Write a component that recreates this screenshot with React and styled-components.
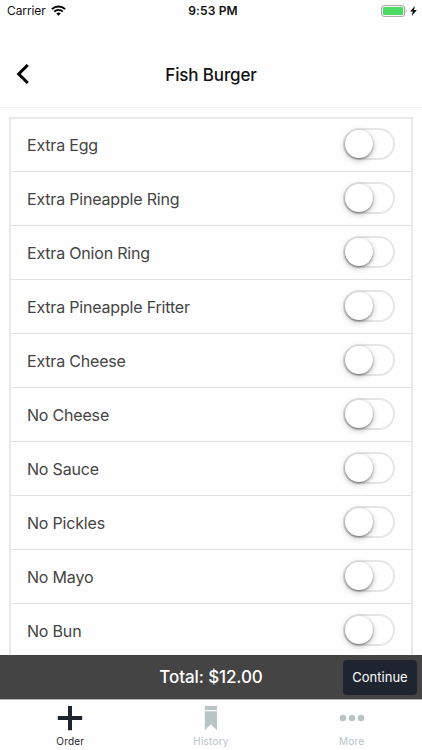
import { useState } from "react";
import styled, { createGlobalStyle } from "styled-components";

const GlobalStyle = createGlobalStyle`
  * {
    box-sizing: border-box;
  }

  body {
    margin: 0;
    background: #fff;
    font-family: Inter, "Liberation Sans", sans-serif;
  }
`;

const Screen = styled.div`
  display: flex;
  flex-direction: column;
  width: 422px;
  height: 750px;
  overflow: hidden;
  background: #fefefe;
`;

// Status bar
const StatusBar = styled.div`
  display: grid;
  grid-template-columns: 1fr auto 1fr;
  align-items: center;
  flex: none;
  height: 22px;
  padding: 0 5px 0 7px;
  color: #111;
  font-size: 12px;
  line-height: 22px;
`;

const Carrier = styled.div`
  display: flex;
  align-items: center;
  gap: 5px;
  letter-spacing: -0.1px;

  svg {
    margin-bottom: 1px;
  }
`;

const Clock = styled.div`
  padding-left: 2px;
  font-weight: 600;
  letter-spacing: 0.15px;
`;

const Power = styled.div`
  display: flex;
  align-items: center;
  justify-content: flex-end;
  gap: 3px;
`;

// Header
const Header = styled.header`
  display: grid;
  grid-template-columns: 48px 1fr 48px;
  align-items: center;
  flex: none;
  height: 86px;
  padding-top: 20px;
  border-bottom: 1px solid #f3f3f3;
`;

const BackButton = styled.button`
  display: flex;
  padding: 0 0 2px 16px;
  border: none;
  background: transparent;
  cursor: pointer;
`;

const Title = styled.h1`
  margin: 0;
  color: #111;
  font-size: 17px;
  font-weight: 500;
  letter-spacing: -0.15px;
  line-height: 24px;
  text-align: center;
`;

// Options
const Content = styled.main`
  flex: 1;
  min-height: 0;
  padding: 9px 9px 0;
  overflow: hidden;
`;

const OptionList = styled.ul`
  margin: 0;
  padding: 0;
  list-style: none;
  border: 2px solid #e9e9e9;
  border-bottom: none;
`;

const Option = styled.li`
  display: flex;
  align-items: center;
  justify-content: space-between;
  height: 54px;
  padding: 0 16px;
  border-bottom: 1px solid #e0e0e0;
  color: #444;
  font-size: 16px;
  letter-spacing: -0.19px;

  &:first-child {
    margin-top: -1px;
  }
`;

const Track = styled.button`
  display: flex;
  align-items: center;
  width: 52px;
  height: 32px;
  margin-bottom: 1px;
  padding: 0;
  border: 2px solid ${({ $on }) => ($on ? "#4cd964" : "#e6e6e6")};
  border-radius: 16px;
  background: ${({ $on }) => ($on ? "#4cd964" : "#fff")};
  cursor: pointer;
`;

const Thumb = styled.span`
  width: 28px;
  height: 28px;
  border-radius: 50%;
  background: #fff;
  box-shadow: 0 2px 6px rgba(0, 0, 0, 0.28), 0 1px 2px rgba(0, 0, 0, 0.4);
  transform: translateX(${({ $on }) => ($on ? 20 : 0)}px);
`;

// Total
const TotalBar = styled.div`
  display: grid;
  grid-template-columns: 1fr auto 1fr;
  align-items: center;
  flex: none;
  height: 45px;
  padding: 0 5px 0 5px;
  border-bottom: 1px solid #b5b5b5;
  background: #444;
`;

const Total = styled.div`
  grid-column: 2;
  color: #fff;
  font-size: 17px;
  font-weight: 500;
  letter-spacing: -0.1px;
`;

const ContinueButton = styled.button`
  justify-self: end;
  width: 74px;
  height: 35px;
  padding: 0;
  border: none;
  border-radius: 4px;
  background: #1e2430;
  color: #fff;
  font: inherit;
  font-size: 13px;
  cursor: pointer;
`;

// Tabs
const TabBar = styled.nav`
  display: grid;
  grid-template-columns: repeat(3, 1fr);
  flex: none;
  height: 50px;
`;

const Tab = styled.button`
  display: flex;
  flex-direction: column;
  align-items: center;
  padding: 5px 0 0;
  border: none;
  background: transparent;
  color: ${({ $active }) => ($active ? "#1e2430" : "#b8c4c6")};
  font: inherit;
  font-size: 10px;
  line-height: 14px;
  letter-spacing: 0.2px;
  cursor: pointer;

  svg {
    margin-bottom: 3px;
  }
`;

const options = [
  "Extra Egg",
  "Extra Pineapple Ring",
  "Extra Onion Ring",
  "Extra Pineapple Fritter",
  "Extra Cheese",
  "No Cheese",
  "No Sauce",
  "No Pickles",
  "No Mayo",
  "No Bun",
];

function WifiIcon() {
  return (
    <svg width="15" height="11" viewBox="0 0 15 11" fill="none" stroke="#000">
      <path d="M.9 4.1a9.4 9.4 0 0 1 13.2 0" strokeWidth="2" />
      <path d="M3.2 6.6a6 6 0 0 1 8.6 0" strokeWidth="1.8" />
      <path d="M5.3 8.6a3.1 3.1 0 0 1 4.4 0L7.5 10.8z" fill="#000" stroke="none" />
    </svg>
  );
}

function BatteryIcon() {
  return (
    <svg width="26" height="12" viewBox="0 0 26 12">
      <rect x="0.6" y="0.6" width="23" height="10.8" rx="2.4" fill="#fff" stroke="#a2a2a2" />
      <rect x="2" y="2" width="20.2" height="8" rx="1.2" fill="#4cd964" />
      <path d="M24.7 4.1c1.2.5 1.2 3.3 0 3.8z" fill="#a2a2a2" />
    </svg>
  );
}

function BoltIcon() {
  return (
    <svg width="7" height="10" viewBox="0 0 7 10">
      <path d="M4.8 0 .2 5.6h2.6L1.8 10l5-6H4z" fill="#000" />
    </svg>
  );
}

function PlusIcon() {
  return (
    <svg width="26" height="26" viewBox="0 0 26 26">
      <path d="M11 1h4v10.1h10.2v3.9H15v10.2h-4V15H.8v-3.9H11z" fill="currentColor" />
    </svg>
  );
}

function BookmarkIcon() {
  return (
    <svg width="26" height="26" viewBox="0 0 26 26" fill="currentColor">
      <path d="M6.8 1H19v4H6.8zM6.8 6.2H19v19.1l-6.1-6.1-6.1 6.1z" />
    </svg>
  );
}

function MoreIcon() {
  return (
    <svg width="26" height="26" viewBox="0 0 26 26" fill="currentColor">
      <circle cx="4" cy="13" r="3.2" />
      <circle cx="13" cy="13" r="3.2" />
      <circle cx="22" cy="13" r="3.2" />
    </svg>
  );
}

function OptionRow({ label }) {
  const [on, setOn] = useState(false);

  return (
    <Option>
      {label}
      <Track
        type="button"
        role="switch"
        aria-checked={on}
        aria-label={label}
        $on={on}
        onClick={() => setOn(!on)}
      >
        <Thumb $on={on} />
      </Track>
    </Option>
  );
}

const tabs = [
  { label: "Order", Icon: PlusIcon },
  { label: "History", Icon: BookmarkIcon },
  { label: "More", Icon: MoreIcon },
];

function App() {
  const [activeTab, setActiveTab] = useState("Order");

  return (
    <>
      <GlobalStyle />
      <Screen>
        <StatusBar>
          <Carrier>
            Carrier
            <WifiIcon />
          </Carrier>
          <Clock>9:53 PM</Clock>
          <Power>
            <BatteryIcon />
            <BoltIcon />
          </Power>
        </StatusBar>

        <Header>
          <BackButton type="button" aria-label="Back">
            <svg width="14" height="22" viewBox="0 0 14 22" fill="none">
              <path d="M11.8 2 2.7 11l9.1 9" stroke="#000" strokeWidth="3" />
            </svg>
          </BackButton>
          <Title>Fish Burger</Title>
        </Header>

        <Content>
          <OptionList>
            {options.map((label) => (
              <OptionRow key={label} label={label} />
            ))}
          </OptionList>
        </Content>

        <TotalBar>
          <Total>Total: $12.00</Total>
          <ContinueButton type="button">Continue</ContinueButton>
        </TotalBar>

        <TabBar>
          {tabs.map(({ label, Icon }) => (
            <Tab
              key={label}
              type="button"
              $active={label === activeTab}
              onClick={() => setActiveTab(label)}
            >
              <Icon />
              {label}
            </Tab>
          ))}
        </TabBar>
      </Screen>
    </>
  );
}

export default App;
